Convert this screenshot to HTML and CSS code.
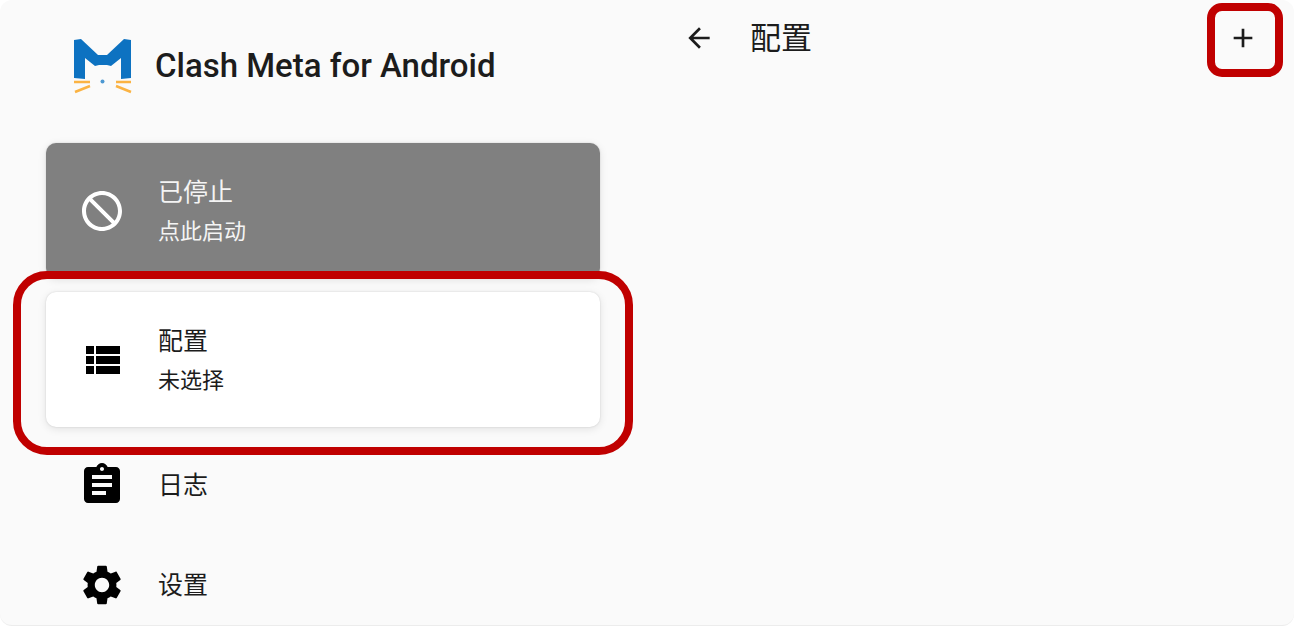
FILE: index.html
```html
<!DOCTYPE html>
<html lang="zh-CN">
<head>
  <meta charset="UTF-8">
  <meta name="viewport" content="width=device-width, initial-scale=1.0">
  <title>Clash Meta for Android</title>
  <link rel="stylesheet" href="styles.css">
</head>
<body>
  <div class="app">
    <!-- Home -->
    <main class="home">
      <header class="brand">
        <svg class="logo" viewBox="0 0 60 56" aria-hidden="true">
          <path fill="#0d72c1" d="M1 2 8 1 25 17H34L51 1 58 2V40L48 41V20L38 28 34 27H26L22 28 12 20V41L1 40Z"/>
          <circle cx="29.500" cy="43.500" r="2" fill="#4d98d2"/>
          <path stroke="#fbb343" stroke-width="2.500" d="M1 44H17M17 48 2 54M43 44H58M43 48 58 54"/>
        </svg>
        <h1>Clash Meta for Android</h1>
      </header>

      <button type="button" class="card stopped">
        <svg class="icon" viewBox="0 0 24 24" aria-hidden="true">
          <path d="M12 2C6.480 2 2 6.480 2 12s4.480 10 10 10 10-4.480 10-10S17.520 2 12 2zM4 12c0-1.850.630-3.550 1.690-4.900L16.900 18.310C15.550 19.370 13.850 20 12 20c-4.420 0-8-3.580-8-8zm14.310 4.900L7.100 5.690C8.450 4.630 10.150 4 12 4c4.420 0 8 3.580 8 8 0 1.850-.630 3.550-1.690 4.900z"/>
        </svg>
        <span class="card-text">
          <span class="label">已停止</span>
          <span class="sub">点此启动</span>
        </span>
      </button>

      <button type="button" class="card marked">
        <svg class="icon" viewBox="0 0 24 24" aria-hidden="true">
          <path d="M4 14h4v-4H4v4zm0 5h4v-4H4v4zM4 9h4V5H4v4zm5 5h12v-4H9v4zm0 5h12v-4H9v4zM9 5v4h12V5H9z"/>
        </svg>
        <span class="card-text">
          <span class="label">配置</span>
          <span class="sub">未选择</span>
        </span>
      </button>

      <nav class="menu">
        <a href="#logs">
          <svg class="icon" viewBox="0 0 24 24" aria-hidden="true">
            <path d="M19 3h-4.180C14.400 1.840 13.300 1 12 1c-1.300 0-2.400.840-2.820 2H5c-1.100 0-2 .900-2 2v14c0 1.100.900 2 2 2h14c1.100 0 2-.900 2-2V5c0-1.100-.900-2-2-2zm-7 0c.550 0 1 .450 1 1s-.450 1-1 1-1-.450-1-1 .450-1 1-1zm2 14H7v-2h7v2zm3-4H7v-2h10v2zm0-4H7V7h10v2z"/>
          </svg>
          <span class="label">日志</span>
        </a>
        <a href="#settings">
          <svg class="icon" viewBox="0 0 24 24" aria-hidden="true">
            <path d="M19.140 12.940c.040-.300.060-.610.060-.940 0-.320-.020-.640-.070-.940l2.030-1.580c.180-.140.230-.410.120-.610l-1.920-3.320c-.120-.220-.370-.290-.590-.220l-2.390.960c-.500-.380-1.030-.700-1.620-.940l-.360-2.540c-.040-.240-.240-.410-.480-.410h-3.840c-.240 0-.430.170-.470.410l-.360 2.540c-.590.240-1.130.570-1.620.940l-2.390-.960c-.220-.080-.470 0-.590.220L2.740 8.870c-.120.210-.080.470.120.610l2.030 1.580c-.050.300-.090.630-.090.940s.020.640.070.940l-2.030 1.580c-.180.140-.230.410-.120.610l1.920 3.320c.120.220.370.290.590.220l2.390-.960c.500.380 1.030.700 1.620.940l.360 2.540c.050.240.240.410.480.410h3.840c.240 0 .440-.170.470-.410l.360-2.540c.590-.240 1.130-.560 1.620-.940l2.390.960c.220.080.470 0 .590-.220l1.920-3.320c.120-.220.070-.470-.120-.610l-2.010-1.580zM12 15.600c-1.980 0-3.600-1.620-3.600-3.600s1.620-3.600 3.600-3.600 3.600 1.620 3.600 3.600-1.620 3.600-3.600 3.600z"/>
          </svg>
          <span class="label">设置</span>
        </a>
      </nav>
    </main>

    <!-- Profiles -->
    <section class="profiles">
      <header class="toolbar">
        <button type="button" class="tool" aria-label="返回">
          <svg viewBox="0 0 24 24" aria-hidden="true">
            <path d="M20 11H7.830l5.590-5.590L12 4l-8 8 8 8 1.410-1.410L7.830 13H20v-2z"/>
          </svg>
        </button>
        <h2>配置</h2>
        <button type="button" class="tool add" aria-label="新建">
          <svg viewBox="0 0 24 24" aria-hidden="true">
            <path d="M19 13h-6v6h-2v-6H5v-2h6V5h2v6h6v2z"/>
          </svg>
        </button>
      </header>
    </section>
  </div>
</body>
</html>
```

FILE: styles.css
```css
* {
  box-sizing: border-box;
}

body {
  margin: 0;
  background: #fff;
  color: #1c1c1c;
  font-family: Roboto, "Noto Sans CJK SC", sans-serif;
}

h1,
h2 {
  margin: 0;
}

button {
  padding: 0;
  border: none;
  background: none;
  color: inherit;
  font: inherit;
  text-align: left;
  cursor: pointer;
}

svg {
  display: block;
  flex: none;
  fill: currentColor;
}

.app {
  display: grid;
  grid-template-columns: 1fr 1fr;
  height: 100vh;
  overflow: hidden;
  background: #fafafa;
  border-bottom: 1px solid #ececec;
  border-radius: 12px;
}

.home {
  padding: 0 47px 0 46px;
}

.brand {
  display: flex;
  align-items: center;
  gap: 22px;
  padding: 38px 27px 49px;
}

.logo {
  width: 60px;
  height: 56px;
}

h1 {
  font-size: 33px;
  font-weight: 500;
  line-height: 40px;
  white-space: nowrap;
}

/* Cards */
.card {
  position: relative;
  display: flex;
  align-items: center;
  gap: 32px;
  width: 100%;
  margin-bottom: 14px;
  padding: 28px 32px;
  border-radius: 10px;
  background: #fff;
  box-shadow: 0 2px 8px rgba(0, 0, 0, 0.1), 0 0 2px rgba(0, 0, 0, 0.14);
}

.stopped {
  background: #808080;
  color: #f4f4f4;
}

.icon {
  width: 48px;
  height: 48px;
  color: #000;
}

.stopped .icon {
  color: #fff;
}

.card-text {
  display: flex;
  flex-direction: column;
  gap: 3px;
  padding-top: 2px;
}

.label {
  padding-top: 2px;
  font-size: 25px;
  line-height: 36px;
}

.sub {
  font-size: 22px;
  line-height: 36px;
}

/* Red highlight frames */
.marked::after,
.add::after {
  content: "";
  position: absolute;
  border: 8px solid #c00000;
  pointer-events: none;
}

.marked::after {
  inset: -21px -33px -28px;
  border-radius: 34px;
}

.add::after {
  inset: -11px -16px -15px -12px;
  border-radius: 15px;
}

/* Menu */
.menu {
  margin-top: -6px;
}

.menu a {
  display: flex;
  align-items: center;
  gap: 32px;
  height: 100px;
  padding: 0 32px;
  color: inherit;
  text-decoration: none;
}

/* Toolbar */
.toolbar {
  display: flex;
  align-items: center;
  height: 76px;
  padding: 0 27px 0 28px;
}

.tool {
  position: relative;
  display: flex;
  align-items: center;
  justify-content: center;
  width: 48px;
  height: 48px;
}

.tool svg {
  width: 32px;
  height: 32px;
}

h2 {
  flex: 1;
  margin-left: 27px;
  padding-top: 2px;
  font-size: 31px;
  font-weight: 400;
  line-height: 40px;
}
```
